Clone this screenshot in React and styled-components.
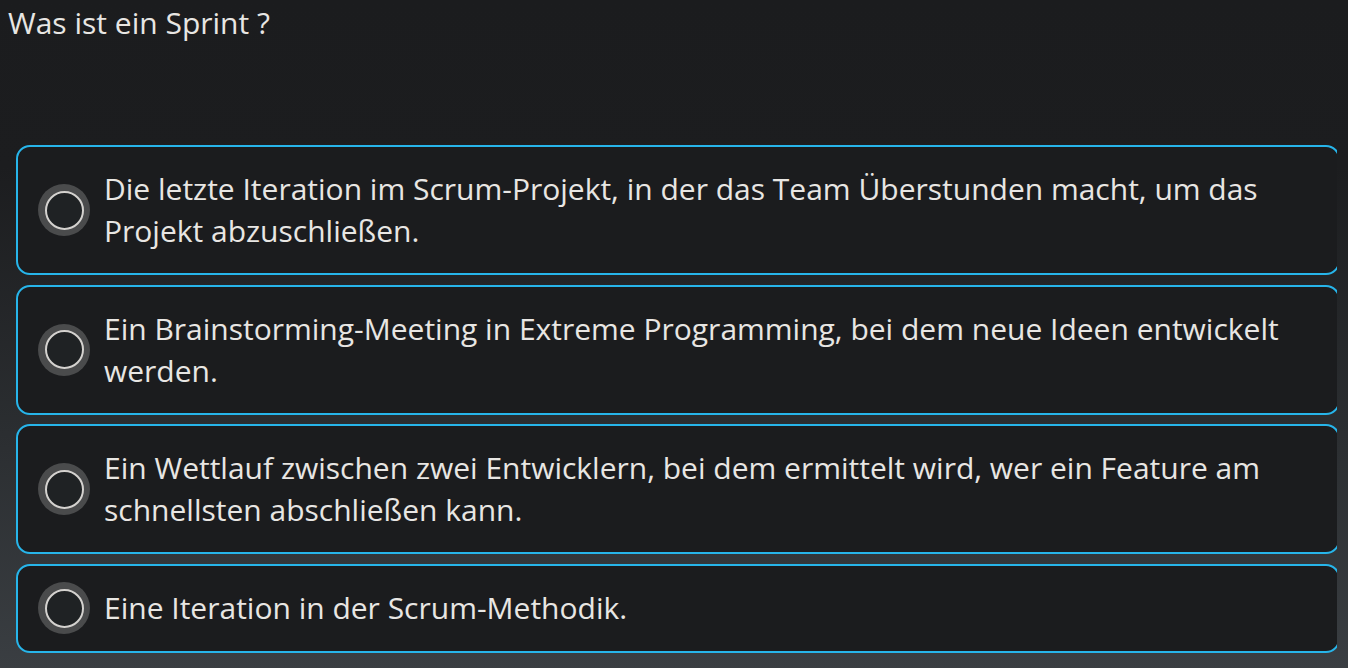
import React from "react";
import styled, { createGlobalStyle } from "styled-components";

const GlobalStyle = createGlobalStyle`
  html, body {
    margin: 0;
    padding: 0;
  }
  body {
    min-height: 668px;
    background: linear-gradient(180deg, #1b1c1e 0%, #1c1d1f 25%, #2b2e31 65%, #3a3e42 100%);
    font-family: "Open Sans", "Noto Sans", sans-serif;
    color: #e8e6e3;
  }
`;

const Page = styled.div`
  height: 668px;
  overflow: hidden;
  box-sizing: border-box;
  padding: 2px 0 0 0;
`;

const Question = styled.h1`
  margin: 0 0 0 8px;
  font-size: 30px;
  font-weight: 400;
  line-height: 42px;
  height: 143px;
`;

const AnswerList = styled.div`
  display: flex;
  flex-direction: column;
  gap: 9.5px;
  margin-left: 16px;
  width: 1321px;
  overflow: hidden;
`;

const Answer = styled.label`
  display: flex;
  align-items: center;
  gap: 14px;
  box-sizing: border-box;
  width: 1324px;
  height: ${(p) => (p.$short ? "89px" : "130px")};
  padding: 0 24px 0 20px;
  background: #1b1c1e;
  border: 2px solid #27b5ea;
  border-radius: 14px;
  cursor: pointer;
`;

const Radio = styled.span`
  flex: 0 0 auto;
  width: 52px;
  height: 52px;
  border-radius: 50%;
  background: #4a4b4c;
  display: flex;
  align-items: center;
  justify-content: center;

  &::after {
    content: "";
    width: 35px;
    height: 35px;
    border-radius: 50%;
    border: 2px solid #d4d2cf;
    background: #1f2224;
  }
`;

const AnswerText = styled.span`
  font-size: 30px;
  line-height: 42px;
  color: #e8e6e3;
`;

const answers = [
  "Die letzte Iteration im Scrum-Projekt, in der das Team Überstunden macht, um das Projekt abzuschließen.",
  "Ein Brainstorming-Meeting in Extreme Programming, bei dem neue Ideen entwickelt werden.",
  "Ein Wettlauf zwischen zwei Entwicklern, bei dem ermittelt wird, wer ein Feature am schnellsten abschließen kann.",
  "Eine Iteration in der Scrum-Methodik.",
];

export default function App() {
  return (
    <Page>
      <GlobalStyle />
      <Question>Was ist ein Sprint ?</Question>
      <AnswerList>
        {answers.map((text, i) => (
          <Answer key={i} $short={i === answers.length - 1}>
            <Radio />
            <AnswerText>{text}</AnswerText>
          </Answer>
        ))}
      </AnswerList>
    </Page>
  );
}
